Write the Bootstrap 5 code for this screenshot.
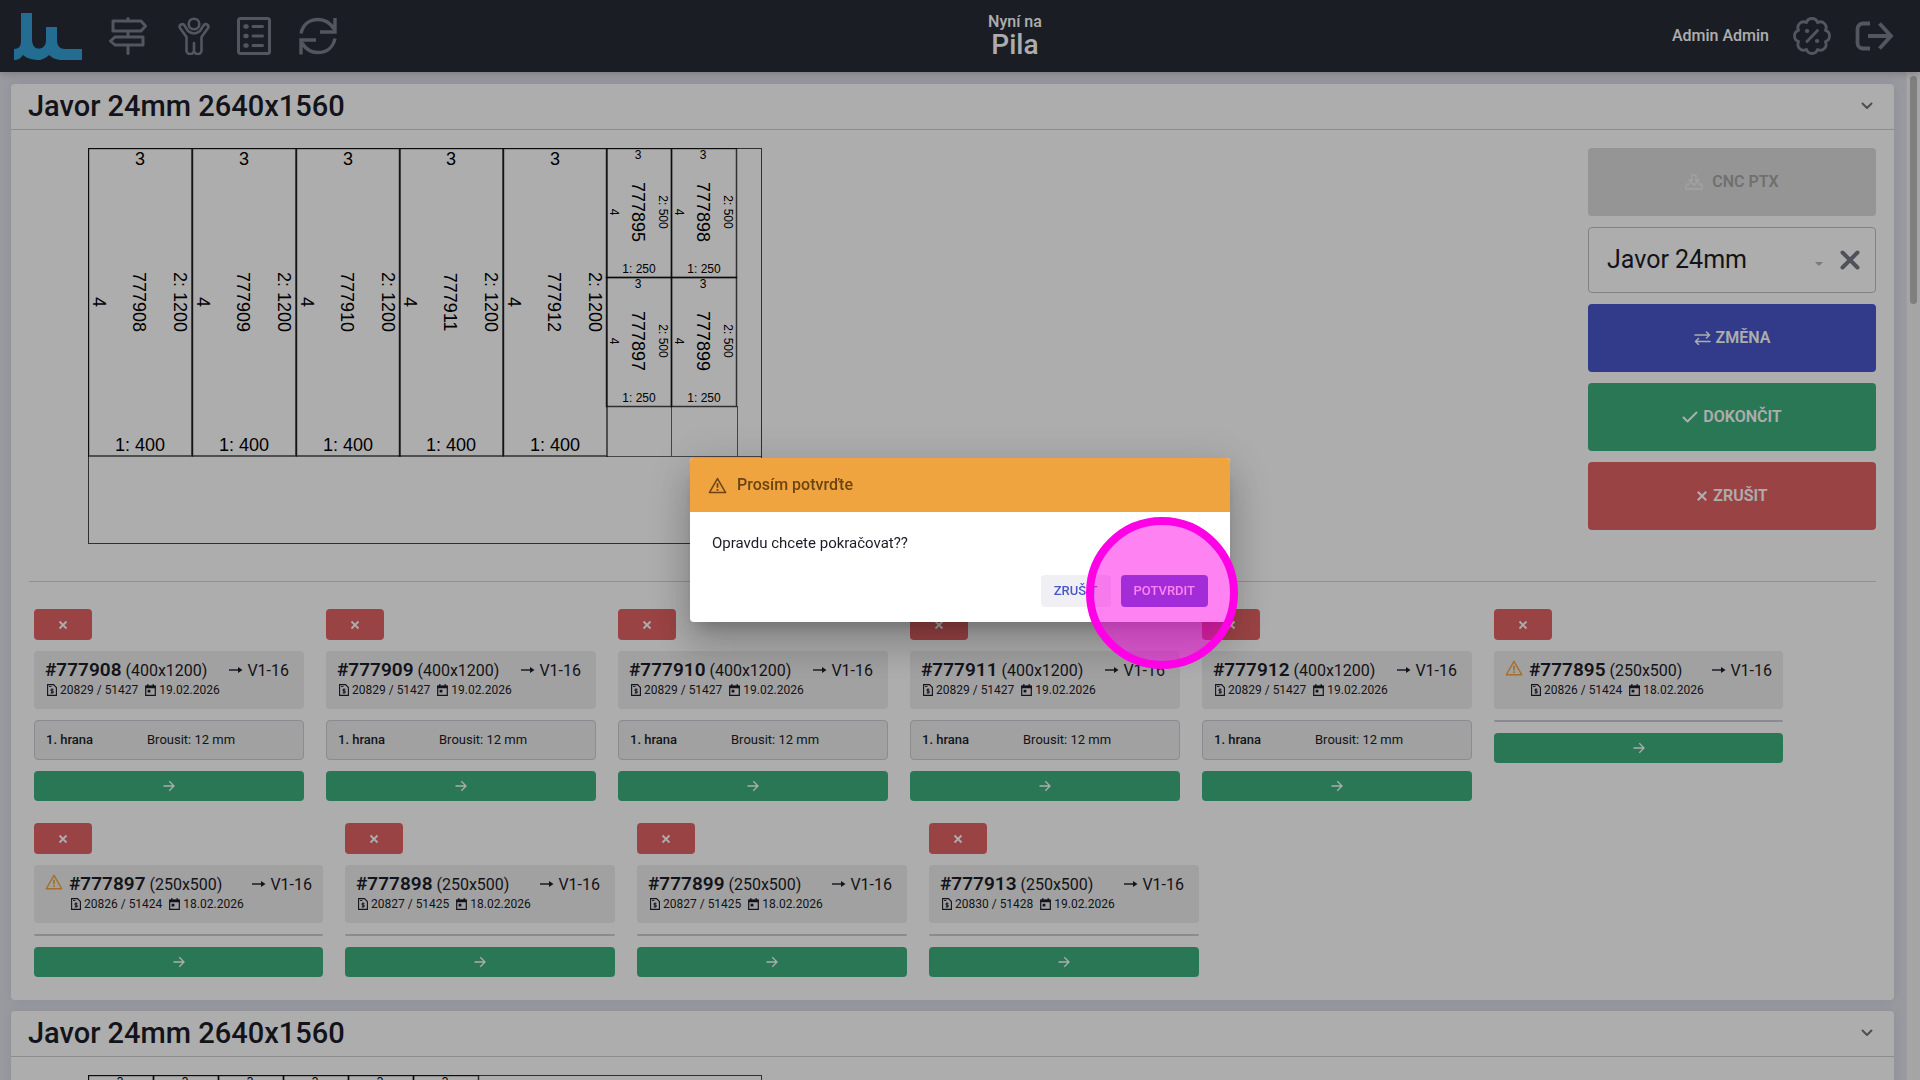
<!DOCTYPE html>
<html lang="cs">
<head>
<meta charset="utf-8">
<meta name="viewport" content="width=device-width, initial-scale=1">
<title>Pila</title>
<link rel="stylesheet" href="https://cdn.jsdelivr.net/npm/bootstrap@5.3.0/dist/css/bootstrap.min.css">
<style>
  :root { --brand: #4a58cb; --ok: #3fb07e; --stop: #e46365; --warn: #f0a440; --ink: #1c1c28; }
  body { font-family: Roboto, "Liberation Sans", sans-serif; color: var(--ink); background: #e2e2ec; }
  svg { display: block; flex: none; }
  .line-icon { fill: none; stroke: currentColor; stroke-width: 2; stroke-linecap: round; stroke-linejoin: round; }

  .topbar { height: 72px; flex: none; background: #272b36; padding: 0 10px 0 14px; color: #fff; box-shadow: 0 2px 8px rgba(0,0,0,.2); z-index: 2; }
  .topbar a { color: #7c7f8d; }
  .station { font-weight: 500; font-size: 16px; line-height: 18px; text-align: center; margin-left: 20px; }
  .station strong { display: block; font-size: 28px; line-height: 28px; font-weight: 500; }
  .user-name { font-size: 16px; font-weight: 500; }
  .main-nav { gap: 27px; }

  .scroller { overflow-y: auto; scrollbar-width: none; padding: 12px 12px 12px 11px; min-width: 0; }
  .scroller::-webkit-scrollbar { display: none; }
  .rail { width: 14px; flex: none; background: #f4f4f4; padding: 4px 3px; border-left: 1px solid #eaeaea; }
  .rail-thumb { height: 228px; border-radius: 4px; background: #bcbcbc; }

  .sheet { border: 0; border-radius: 4px; margin-bottom: 11px; box-shadow: 0 0 12px rgba(30,30,70,.08); --bs-card-color: var(--ink); }
  .sheet-head { height: 46px; padding: 0 17px 2px; border-bottom: 1px solid #cfcfd6; }
  .sheet-head h2 { font-size: 29px; line-height: 36px; font-weight: 500; margin: 0; }
  .sheet-head button { color: #74747c; }
  .sheet-body { padding: 18px; }
  .board { margin-left: 59px; font-family: "Liberation Sans", Arial, sans-serif; }
  .actions { width: 288px; gap: 11px; }
  .tall { height: 68px; font-size: 16px; font-weight: 600; border: 0; border-radius: 4px; color: #fff; gap: 5px; }
  .tall:disabled { background: #dcdcdc; color: #a5a5a5; opacity: 1; gap: 9px; }
  .tall:disabled svg { color: #f0f0f0; }
  .fill-brand, .fill-brand:hover { background: var(--brand); color: #fff; }
  .fill-ok, .fill-ok:hover { background: var(--ok); color: #fff; }
  .fill-stop, .fill-stop:hover { background: var(--stop); color: #fff; }
  .picker { height: 66px; border: 1px solid #bfbfc8; border-radius: 4px; padding: 0 14px 0 18px; }
  .picker select { appearance: none; border: 0; background: none; font-size: 25px; color: var(--ink); padding: 0; min-width: 0; }
  .picker button { color: #777a86; }

  .pieces { border-top: 1px solid #d4d4da; margin-top: 37px; padding: 27px 5px 5px; gap: 22px; }
  .piece { width: 270px; }
  .piece-warn { width: 289px; }
  .piece .btn { height: 30px; border: 0; border-radius: 4px; padding: 0; }
  .piece .btn-drop { width: 58px; height: 31px; }
  .info { height: 58px; background: #ededee; border-radius: 4px; margin: 11px 0; padding: 7px 15px 0 11px; }
  .piece-warn .info { padding-right: 11px; gap: 6px; }
  .info-alert { color: var(--warn); padding-top: 1px; }
  .info-main { line-height: 23px; font-size: 16px; white-space: nowrap; }
  .info-main b { font-size: 19px; font-weight: 600; }
  .info-sub { line-height: 16px; font-size: 12px; white-space: nowrap; padding-left: 2px; gap: 3px; }
  .edge { background: #ededee; border: 1px solid #ccccd4; border-radius: 4px; font-size: 13px; margin-bottom: 11px; }
  .edge-row { padding: 9px 11px; line-height: 20px; }
  .edge-row b { width: 101px; font-weight: 500; }

  .modal { --bs-modal-width: 540px; }
  .modal-backdrop { --bs-backdrop-opacity: .32; }
  .modal-content { border: 0; border-radius: 4px; color: var(--ink); box-shadow: 0 11px 15px -7px rgba(0,0,0,.2), 0 24px 38px 3px rgba(0,0,0,.14), 0 9px 46px 8px rgba(0,0,0,.12); }
  .ask-head { height: 54px; background: var(--warn); color: #6b4511; border-radius: 4px 4px 0 0; padding: 0 18px; gap: 10px; font-size: 16px; font-weight: 500; }
  .ask-text { padding: 21px 22px; font-size: 15px; line-height: 21px; }
  .ask-foot { padding: 0 22px 15px; gap: 10px; }
  .ask-foot .btn { height: 32px; border: 0; border-radius: 4px; font-size: 13px; font-weight: 500; padding: 0 13px; }
  .btn-soft, .btn-soft:hover { background: #f0f0f4; color: var(--brand); }
  .tap-ring { position: absolute; left: 396px; top: 59px; width: 152px; height: 152px; border-radius: 50%; border: 8px solid #ff00e6; background: rgba(255,0,230,.49); pointer-events: none; }
</style>
<script src="https://cdn.jsdelivr.net/npm/bootstrap@5.3.0/dist/js/bootstrap.bundle.min.js"></script>
</head>
<body class="vh-100 overflow-hidden d-flex flex-column">

<svg width="0" height="0" class="position-absolute" aria-hidden="true">
  <symbol id="i-x" viewBox="0 0 10 10"><path d="M1.500 1.500l7 7M8.500 1.500l-7 7" fill="none" stroke="currentColor" stroke-width="1.800"/></symbol>
  <symbol id="i-next" viewBox="0 0 12 12"><path d="M.5 6h10.500M6.300 1.200L11 6l-4.700 4.800" fill="none" stroke="currentColor" stroke-width="1.300"/></symbol>
  <symbol id="i-to" viewBox="0 0 14 10"><path d="M0 5h12" stroke="currentColor" stroke-width="1.400"/><path d="M9 2l4.500 3L9 8z" fill="currentColor"/></symbol>
  <symbol id="i-warn" viewBox="0 0 20 18"><path d="M10 1.600L18.600 16.500H1.400z" fill="none" stroke="currentColor" stroke-width="1.600" stroke-linejoin="round"/><path d="M10 6.500v5M10 12.700v1.800" stroke="currentColor" stroke-width="1.900"/></symbol>
  <symbol id="i-bill" viewBox="0 0 10 12"><path d="M.6.600h5.900L9.400 3.500v7.900H.600z" fill="none" stroke="currentColor" stroke-width="1.100"/><path d="M2 2.500h2.500M6.500 5.300H4v1.700h2.200v1.800H3.600M5 4.500v5.200" fill="none" stroke="currentColor" stroke-width=".9"/></symbol>
  <symbol id="i-cal" viewBox="0 0 11 12"><path d="M.7 2.200h9.600v9.100H.700z" fill="none" stroke="currentColor" stroke-width="1.200"/><path d="M.5 1.800h10v2.400H.500zM2 .3h1.500v2H2zM7.500.3H9v2H7.500zM2.600 5.700h2.800v2.800H2.600z" fill="currentColor"/></symbol>
</svg>

<header class="topbar d-flex align-items-center justify-content-between position-relative">
  <nav class="main-nav d-flex align-items-center" aria-label="Hlavní">
    <a href="#" aria-label="Domů">
      <svg width="68" height="47" viewBox="0 0 68 47">
        <path d="M0 36C5 36 7 33 7 28V0H18V26C18 33 21 36 27 36V47C20 47 13 46 9 42C7 45 4 47 0 47Z" fill="#34a1d8"/>
        <path d="M22 36C29 36 32 33 32 27V14H43V27C43 33 46 36 51 36H68V47H49C43 47 38 45 35 42C31 46 27 47 22 47Z" fill="#34a1d8"/>
        <path d="M9 42L11 38Q8 45 2 47Q7 46 9 42ZM35 42L38 38Q34 46 25 47Q31 46 35 42Z" fill="#2a82b2" opacity=".7"/>
      </svg>
    </a>
    <a href="#" aria-label="Rozcestník"><svg width="38" height="38" viewBox="0 0 38 38" class="line-icon" style="stroke-width:3"><path d="M19 1.500V4M19 14v6M19 28v8.500M4 4h28l4.500 5-4.500 5H4zM34 20H6l-4.500 4L6 28h28z"/></svg></a>
    <a href="#" aria-label="Pracovník" class="ms-1"><svg width="32" height="38" viewBox="0 0 32 38" class="line-icon" style="stroke-width:2.600"><circle cx="16" cy="7" r="5.300"/><path d="M10 14L6.500 8.500A2.500 2.500 0 0 0 2 11l6.500 9v12.500a3.700 3.700 0 0 0 7.500 1.500a3.700 3.700 0 0 0 7.500-1.500V20L30 11a2.500 2.500 0 0 0-4.500-2.500L22 14M10 14Q16 19 22 14M16 26v8"/></svg></a>
    <a href="#" aria-label="Seznam"><svg width="34" height="38" viewBox="0 0 34 38" class="line-icon" style="stroke-width:3"><rect x="1.500" y="1.500" width="31" height="35" rx="2"/><path d="M16 9.500h9.500M16 19h9.500M16 28.500h9.500"/><path d="M8.500 9.500h1M8.500 19h1M8.500 28.500h1" style="stroke-width:4.500"/></svg></a>
    <a href="#" aria-label="Obnovit"><svg width="40" height="38" viewBox="0 0 40 38" class="line-icon" style="stroke-width:3.400;stroke-linecap:butt;stroke-linejoin:miter"><path d="M3 16.500C5 7 12 2.500 20 2.500c7 0 12 3 16 9.500M37 1v14H22M37 21.500C35 31 28 35.500 20 35.500c-7 0-12-3-16-9.500M3 37.500V23h15"/></svg></a>
  </nav>
  <div class="station">Nyní na<strong>Pila</strong></div>
  <div class="d-flex align-items-center">
    <span class="user-name">Admin Admin</span>
    <a href="#" aria-label="Slevy" class="ms-4"><svg width="38" height="38" viewBox="0 0 38 38" class="line-icon" style="stroke-width:2.800"><path d="M13.450 5.600A5.800 5.800 0 0 1 24.550 5.600A5.800 5.800 0 0 1 32.400 13.450A5.800 5.800 0 0 1 32.400 24.550A5.800 5.800 0 0 1 24.550 32.400A5.800 5.800 0 0 1 13.450 32.400A5.800 5.800 0 0 1 5.600 24.550A5.800 5.800 0 0 1 5.600 13.450A5.800 5.800 0 0 1 13.450 5.600zM14 24.500L24.500 13.500"/><path d="M14 14h.2M24 24h.2" style="stroke-width:4.200"/></svg></a>
    <a href="#" aria-label="Odhlásit" class="ms-4 me-3"><svg width="39" height="30" viewBox="0 0 39 30" class="line-icon" style="stroke-width:3.800;stroke-linecap:butt;stroke-linejoin:miter"><path d="M15 2.500H8a5.500 5.500 0 0 0-5.500 5.500v14A5.500 5.500 0 0 0 8 27.500h7M13 15h23M24.500 2.500L36 15L24.500 27.500"/></svg></a>
  </div>
</header>

<div class="d-flex flex-fill" style="min-height:0">
  <main class="scroller flex-fill">
    <section class="card sheet">
      <div class="sheet-head d-flex align-items-center justify-content-between">
        <h2>Javor 24mm 2640x1560</h2>
        <button class="btn p-0 border-0 me-1" aria-label="Sbalit"><svg width="12" height="8" viewBox="0 0 12 8" class="line-icon"><path d="M1.500 1.500L6 6l4.500-4.500"/></svg></button>
      </div>
      <div class="sheet-body">
        <div class="d-flex justify-content-between align-items-start">
          <svg id="board-main" class="board" width="676" height="396" viewBox="0 0 676 396"></svg>
          <div class="actions d-flex flex-column">
            <button class="btn tall d-flex align-items-center justify-content-center" disabled>
              <svg width="18" height="16" viewBox="0 0 18 16" class="line-icon"><path d="M7 1h4v5h3l-5 5-5-5h3zM4.500 10H2l-1 2v3h16v-3l-1-2h-2.500" style="stroke-width:1.300"/></svg>CNC PTX</button>
            <div class="picker d-flex align-items-center">
              <select class="flex-fill" aria-label="Materiál"><option>Javor 24mm</option></select>
              <svg width="8" height="5" viewBox="0 0 8 5" class="mt-2"><path d="M0 0h8L4 4z" fill="#b4b4b9"/></svg>
              <button class="btn p-0 border-0 ms-3" aria-label="Vymazat"><svg width="22" height="20" viewBox="0 0 22 20"><path d="M3.500 2.500l15 15M18.500 2.500l-15 15" stroke="currentColor" stroke-width="4" stroke-linecap="round"/></svg></button>
            </div>
            <button class="btn tall fill-brand d-flex align-items-center justify-content-center"><svg width="17" height="14" viewBox="0 0 17 14" class="line-icon"><path d="M1 4h14.500M12.500 1l3 3-3 3M16 10.500H1.500M4.500 7.500l-3 3 3 3" style="stroke-width:1.500"/></svg>ZMĚNA</button>
            <button class="btn tall fill-ok d-flex align-items-center justify-content-center"><svg width="16" height="14" viewBox="0 0 16 14" class="line-icon"><path d="M1.500 7.500L5.500 11.500L14.500 2.500"/></svg>DOKONČIT</button>
            <button class="btn tall fill-stop d-flex align-items-center justify-content-center"><svg width="12" height="12"><use href="#i-x"/></svg>ZRUŠIT</button>
          </div>
        </div>
        <div id="pieces" class="pieces d-flex flex-wrap align-items-start"></div>
      </div>
    </section>
    <section class="card sheet">
      <div class="sheet-head d-flex align-items-center justify-content-between">
        <h2>Javor 24mm 2640x1560</h2>
        <button class="btn p-0 border-0 me-1" aria-label="Sbalit"><svg width="12" height="8" viewBox="0 0 12 8" class="line-icon"><path d="M1.500 1.500L6 6l4.500-4.500"/></svg></button>
      </div>
      <div class="sheet-body">
        <svg id="board-next" class="board" width="676" height="396" viewBox="0 0 676 396"></svg>
      </div>
    </section>
  </main>
  <div class="rail" aria-hidden="true"><div class="rail-thumb"></div></div>
</div>

<div class="modal-backdrop show"></div>
<div class="modal d-block" tabindex="-1" role="dialog" aria-labelledby="ask-title">
  <div class="modal-dialog modal-dialog-centered">
    <div class="modal-content">
      <div class="ask-head d-flex align-items-center"><svg width="19" height="17"><use href="#i-warn"/></svg><span id="ask-title">Prosím potvrďte</span></div>
      <div class="ask-text">Opravdu chcete pokračovat??</div>
      <div class="ask-foot d-flex justify-content-end">
        <button class="btn btn-soft">ZRUŠIT</button>
        <button class="btn fill-brand">POTVRDIT</button>
      </div>
      <div class="tap-ring"></div>
    </div>
  </div>
</div>

<script>
  const icon = (id, w, h, cls = '') => `<svg width="${w}" height="${h}" class="${cls}" aria-hidden="true"><use href="#${id}"/></svg>`;

  // id, size, order / job, date, grinding in mm, warning
  const pieces = [
    [777908, '400x1200', '20829 / 51427', '19.02.2026', 12, 0],
    [777909, '400x1200', '20829 / 51427', '19.02.2026', 12, 0],
    [777910, '400x1200', '20829 / 51427', '19.02.2026', 12, 0],
    [777911, '400x1200', '20829 / 51427', '19.02.2026', 12, 0],
    [777912, '400x1200', '20829 / 51427', '19.02.2026', 12, 0],
    [777895, '250x500', '20826 / 51424', '18.02.2026', 0, 1],
    [777897, '250x500', '20826 / 51424', '18.02.2026', 0, 1],
    [777898, '250x500', '20827 / 51425', '18.02.2026', 0, 0],
    [777899, '250x500', '20827 / 51425', '18.02.2026', 0, 0],
    [777913, '250x500', '20830 / 51428', '19.02.2026', 0, 0]
  ];
  document.getElementById('pieces').innerHTML = pieces.map(([id, size, order, date, grind, warn]) => `
    <article class="piece ${warn ? 'piece-warn' : ''}">
      <button class="btn btn-drop fill-stop d-flex align-items-center justify-content-center" aria-label="Odebrat ${id}">${icon('i-x', 10, 10)}</button>
      <div class="info d-flex">
        ${warn ? `<span class="info-alert">${icon('i-warn', 18, 18)}</span>` : ''}
        <div class="flex-fill">
          <div class="info-main d-flex justify-content-between"><span><b>#${id}</b> (${size})</span>
            <span class="d-flex align-items-center gap-1">${icon('i-to', 14, 10)}V1-16</span></div>
          <div class="info-sub d-flex align-items-center">${icon('i-bill', 10, 12)}<span class="me-1">${order}</span>${icon('i-cal', 11, 12)}<span>${date}</span></div>
        </div>
      </div>
      <div class="edge">${grind ? `<div class="edge-row d-flex"><b>1. hrana</b><span>Brousit: ${grind} mm</span></div>` : ''}</div>
      <button class="btn fill-ok w-100 d-flex align-items-center justify-content-center" aria-label="Další ${id}">${icon('i-next', 12, 12)}</button>
    </article>`).join('');

  const label = (x, y, size, text) => `<text x="${x}" y="${y}" font-size="${size}" text-anchor="middle">${text}</text>`;
  const upright = (x, y, size, text) => `<text transform="translate(${x} ${y}) rotate(90)" font-size="${size}" text-anchor="middle">${text}</text>`;
  const box = (x, y, w, h, weight) => `<rect x="${x}" y="${y}" width="${w}" height="${h}" fill="none" stroke="#000" stroke-opacity=".72" stroke-width="${weight}"/>`;
  const large = (i, id) => { const x = i * 104 - (i > 2 ? 1 : 0);
    return box(x + .5, .5, 103.500, 307.500, 1.500) + label(x + 52, 17, 18, '3') + label(x + 52, 303, 18, '1: 400') +
      upright(x + 5, 154, 18, '4') + upright(x + 45, 154, 18, id) + upright(x + 86, 154, 18, '2: 1200'); };
  const cell = (x, y) => box(x + .5, y + .5, 65, 129, 1.500) + label(x + 32, y + 11, 12, '3');
  const small = (x, y, id) => cell(x, y) + label(x + 33, y + 125, 12, '1: 250') +
      upright(x + 4, y + 64, 12, '4') + upright(x + 26, y + 64, 18, id) + upright(x + 53, y + 64, 12, '2: 500');

  document.getElementById('board-main').innerHTML = box(.5, .5, 673, 395, 1) +
    [777908, 777909, 777910, 777911, 777912].map((id, i) => large(i, id)).join('') +
    small(518, 0, 777895) + small(583, 0, 777898) + small(518, 129, 777897) + small(583, 129, 777899) +
    '<path d="M518 308.500h155.500M583.500 258v50M649.500 258v50" stroke="#000" stroke-opacity=".6"/>';
  document.getElementById('board-next').innerHTML = box(.5, .5, 673, 395, 1) +
    [0, 1, 2, 3, 4, 5].map(i => cell(i * 65, 0)).join('');
</script>
</body>
</html>
